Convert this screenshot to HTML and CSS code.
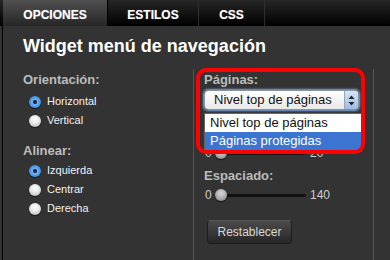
FILE: index.html
```html
<!DOCTYPE html>
<html lang="es">

<head>
    <meta charset="UTF-8">
    <meta name="viewport" content="width=device-width, initial-scale=1.0">
    <title>Widget menú de navegación</title>

    <link rel="stylesheet" href="styles.css">
</head>

<body>
    <nav class="tabs">
        <div class="tab active">OPCIONES</div>
        <div class="tab">ESTILOS</div>
        <div class="tab">CSS</div>
    </nav>

    <section class="panel">
        <h1>Widget menú de navegación</h1>

        <div class="columns">
            <div class="col-left">
                <h4>Orientación:</h4>
                <div class="opt"><span class="radio on"></span>Horizontal</div>
                <div class="opt"><span class="radio"></span>Vertical</div>

                <h4 class="group">Alinear:</h4>
                <div class="opt"><span class="radio on"></span>Izquierda</div>
                <div class="opt"><span class="radio"></span>Centrar</div>
                <div class="opt"><span class="radio"></span>Derecha</div>
            </div>

            <div class="col-right">
                <h4>Páginas:</h4>
                <div class="select">
                    <span class="select-text">Nivel top de páginas</span>
                    <span class="arrows">
                        <svg width="7" height="11" viewBox="0 0 7 11">
                            <path d="M3.5 0.5 L6.5 4 L0.5 4 Z" fill="#222" />
                            <path d="M3.5 10.5 L6.5 7 L0.5 7 Z" fill="#222" />
                        </svg>
                    </span>
                </div>

                <div class="slider first">
                    <span class="num">0</span>
                    <span class="track"><span class="thumb"></span></span>
                    <span class="num">20</span>
                </div>

                <h4 class="spacing">Espaciado:</h4>
                <div class="slider">
                    <span class="num">0</span>
                    <span class="track"><span class="thumb"></span></span>
                    <span class="num">140</span>
                </div>

                <button class="btn">Restablecer</button>

                <ul class="dropdown">
                    <li>Nivel top de páginas</li>
                    <li class="sel">Páginas protegidas</li>
                </ul>
                <div class="highlight"></div>
            </div>
        </div>
    </section>
</body>

</html>
```

FILE: styles.css
```css
* {
    padding: 0;
    margin: 0;
    box-sizing: border-box;
}

body {
    background: #333;
    font-family: "Liberation Sans", Arial, sans-serif;
    width: 390px;
    height: 260px;
    overflow: hidden;
}

.tabs {
    height: 26px;
    padding-left: 3px;
    display: flex;
    background: linear-gradient(#262626, #000);
}

.tab {
    height: 26px;
    padding-top: 5px;
    line-height: 21px;
    font-size: 12px;
    font-weight: bold;
    color: white;
    text-align: center;
    border-right: 1px solid #2e2e2e;
    text-shadow: 0 0 1px rgba(255, 255, 255, 0.4);
}

.tab:nth-child(1) {
    width: 105px;
}

.tab:nth-child(2) {
    width: 91px;
}

.tab:nth-child(3) {
    width: 66px;
}

.active {
    background: linear-gradient(#505050, #262626);
    border-right-color: #000;
}

.panel {
    margin-left: 2px;
    height: 234px;
    border-left: 1px solid #000;
    background: #333;
    padding-top: 9px;
    padding-left: 20px;
}

h1 {
    font-size: 18px;
    line-height: 22px;
    color: white;
}

h4 {
    font-size: 13px;
    line-height: 16px;
    color: #bcbcbc;
}

.columns {
    display: flex;
    margin-top: 12px;
    height: 200px;
}

.col-left {
    width: 170px;
    padding-top: 3px;
}

.opt {
    height: 19px;
    line-height: 19px;
    font-size: 11px;
    color: #f2f2f2;
    display: flex;
    align-items: center;
}

.col-left h4 + .opt {
    margin-top: 4px;
}

.col-left .group + .opt {
    margin-top: 2px;
}

.group {
    margin-top: 13px;
}

.radio {
    width: 12px;
    height: 12px;
    border-radius: 50%;
    margin-left: 6px;
    margin-right: 6px;
    background: radial-gradient(circle at 50% 35%, #fff 0, #e6e6e6 45%, #a9a9a9 100%);
    box-shadow: 0 1px 1px rgba(0, 0, 0, 0.6);
}

.radio.on {
    background: radial-gradient(circle, #1c2a44 0, #1c2a44 18%, #6fb1f2 30%, #3f8ee0 70%, #2c6dbd 100%);
}

.col-right {
    position: relative;
    width: 181px;
    border-left: 1px solid #555;
    border-right: 1px solid #555;
    padding-top: 3px;
    padding-left: 10px;
}

.select {
    width: 155px;
    height: 20px;
    margin-top: 2px;
    display: flex;
    border: 1px solid #8a93a5;
    border-radius: 4px;
    background: linear-gradient(#fff, #e9e9e9);
    box-shadow: 0 0 2px 1px #7ea6df;
    overflow: hidden;
}

.select-text {
    flex: 1;
    padding-left: 9px;
    font-size: 13px;
    line-height: 18px;
    color: #111;
}

.arrows {
    width: 14px;
    display: flex;
    align-items: center;
    justify-content: center;
    border-left: 1px solid #9aa6b8;
    background: linear-gradient(#d6e5f7, #9dbde6);
}

.slider {
    height: 14px;
    display: flex;
    align-items: center;
    font-size: 12px;
    color: #cfcfcf;
}

.slider.first {
    margin-top: 36px;
}

.spacing {
    margin-top: 8px;
}

.spacing + .slider {
    margin-top: 4px;
}

.num {
    width: 11px;
    padding-left: 1px;
}

.num:last-child {
    width: auto;
    padding-left: 4px;
}

.track {
    position: relative;
    width: 91px;
    height: 3px;
    background: #111;
    border-radius: 2px;
}

.thumb {
    position: absolute;
    left: 0;
    top: -5px;
    width: 12px;
    height: 12px;
    border-radius: 50%;
    background: radial-gradient(circle at 50% 35%, #d8d8d8 0, #a6a6a6 60%, #777 100%);
    box-shadow: 0 1px 1px rgba(0, 0, 0, 0.7);
}

.btn {
    display: block;
    margin-top: 18px;
    margin-left: 3px;
    width: 85px;
    height: 24px;
    font-family: "Liberation Sans", Arial, sans-serif;
    font-size: 12px;
    color: #d8d8d8;
    background: linear-gradient(#4b4b4b, #262626);
    border: 1px solid #1c1c1c;
    border-top-color: #555;
    border-radius: 4px;
}

.dropdown {
    position: absolute;
    left: 10px;
    top: 44px;
    width: 158px;
    list-style: none;
    background: white;
    border: 1px solid #666;
    font-size: 13px;
    color: #111;
}

.dropdown li {
    height: 18px;
    line-height: 18px;
    padding-left: 5px;
}

.dropdown .sel {
    height: 19px;
    background: #3b74d1;
    color: white;
}

.highlight {
    position: absolute;
    left: 2px;
    top: -1px;
    width: 169px;
    height: 86px;
    border: 4px solid #f00;
    border-radius: 10px;
}
```
